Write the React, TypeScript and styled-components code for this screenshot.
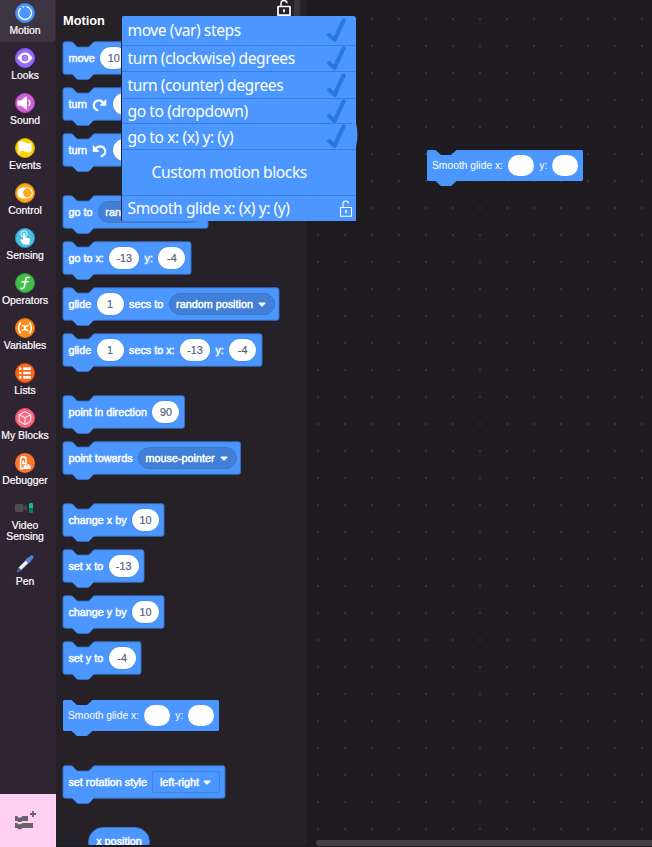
import React from "react";
import styled, { createGlobalStyle, css } from "styled-components";

const Global = createGlobalStyle`
  *, *::before, *::after { box-sizing: border-box; }
  html, body { margin: 0; padding: 0; background: #1e1c20; }
  svg { display: block; }
`;

const BLUE = "#4c97ff";
const EDGE = "#3373cc";

const Editor = styled.div`
  position: relative;
  display: flex;
  width: 652px;
  height: 847px;
  overflow: hidden;
  font-family: "Liberation Sans", Arial, sans-serif;
`;

/* ---------- category rail ---------- */

const Rail = styled.nav`
  display: flex;
  flex-direction: column;
  width: 56px;
  flex: none;
  background: #2e2432;
`;

const Category = styled.div<{ $active?: boolean; $tall?: boolean }>`
  display: flex;
  flex-direction: column;
  align-items: center;
  width: ${(p) => (p.$active ? 55 : 50)}px;
  height: ${(p) => (p.$tall ? 56 : p.$active ? 42 : 45)}px;
  padding-top: 3px;
  padding-right: ${(p) => (p.$active ? 5 : 0)}px;
  margin-bottom: ${(p) => (p.$active ? 3 : 0)}px;
  background: ${(p) => (p.$active ? "#3d3441" : "transparent")};
`;

const CategoryLabel = styled.span`
  margin-top: 2px;
  font-size: 10.4px;
  line-height: 11px;
  color: #fff;
  text-align: center;
  white-space: pre;
  -webkit-text-stroke: 0.2px #fff;
`;

const Extensions = styled.div`
  display: flex;
  align-items: center;
  justify-content: center;
  height: 53px;
  margin-top: auto;
  padding-right: 6px;
  background: #ffd0f2;
`;

/* ---------- palette ---------- */

const dots = (color: string) => css`
  background-image: radial-gradient(circle at 1px 1px, ${color} 1px, transparent 1.3px);
  background-size: 27px 27px;
`;

const Palette = styled.section`
  width: 250px;
  flex: none;
  height: 845px;
  overflow: hidden;
  padding-left: 6px;
  background-color: #252126;
  ${dots("#2a272c")}
  background-position: 18px 18px;
`;

const PaletteTitle = styled.h1`
  margin: 0 0 0 1px;
  height: 41px;
  padding-top: 13px;
  font-size: 12.8px;
  line-height: 15px;
  font-weight: bold;
  color: #fff;
`;

const BlockBox = styled.div<{ $w: number; $gap: number; $plain?: boolean }>`
  position: relative;
  display: flex;
  align-items: center;
  gap: 5.4px;
  width: ${(p) => p.$w + 1}px;
  height: ${(p) => (p.$plain ? 31 : 34)}px;
  margin-bottom: ${(p) => p.$gap}px;
  padding-left: ${(p) => (p.$plain ? 6 : 6.4)}px;
  font-size: 10.8px;
  line-height: 14px;
  color: #fff;
  white-space: pre;
`;

const BlockShape = styled.svg`
  position: absolute;
  left: 0;
  top: 0;
  overflow: visible;
`;

const Word = styled.span<{ $thin?: boolean; $w?: number }>`
  position: relative;
  width: ${(p) => (p.$w ? p.$w + "px" : "auto")};
  font-size: ${(p) => (p.$thin ? "10.3px" : "10.8px")};
  -webkit-text-stroke: ${(p) => (p.$thin ? "0" : "0.45px #fff")};
`;

const Value = styled.span<{ $w: number }>`
  position: relative;
  width: ${(p) => p.$w}px;
  height: 21.6px;
  border-radius: 11px;
  background: #fff;
  box-shadow: 0 0 0 0.5px #4285e4;
  color: #575e75;
  line-height: 22px;
  text-align: center;
  flex: none;
  -webkit-text-stroke: 0.2px #575e75;
`;

const Slot = styled(Value)`
  height: 20.6px;
  box-shadow: none;
`;

const Choice = styled.span<{ $w: number; $square?: boolean }>`
  position: relative;
  display: flex;
  align-items: center;
  justify-content: space-between;
  flex: none;
  width: ${(p) => p.$w}px;
  height: 22px;
  padding: 0 8px 0 6.5px;
  border-radius: ${(p) => (p.$square ? 2 : 11)}px;
  border: 1px solid ${(p) => (p.$square ? "#3f83e0" : "#3b78cb")};
  background: ${(p) => (p.$square ? BLUE : "#4280d7")};
`;

const TurnIcon = styled.svg`
  position: relative;
  flex: none;
`;

const Reporter = styled.div`
  width: 62px;
  height: 30px;
  border-radius: 15px;
  border: 1px solid ${EDGE};
  background: ${BLUE};
  color: #fff;
  font-size: 10.8px;
  line-height: 27px;
  text-align: center;
  -webkit-text-stroke: 0.45px #fff;
`;

const ReporterRow = styled.div`
  display: flex;
  align-items: flex-start;
  gap: 8px;
  margin-left: 1px;
`;

const Checkbox = styled.span`
  width: 17px;
  height: 17px;
  margin-top: 5.5px;
  border-radius: 3px;
  background: #232229;
`;

/* ---------- workspace ---------- */

const Workspace = styled.main`
  flex: 1;
  display: flex;
  flex-direction: column;
  justify-content: space-between;
  height: 847px;
  padding: 150px 0 1px;
  background-color: #1e1c20;
  ${dots("#353338")}
  background-position: 11px 18px;
`;

const Dropped = styled.div`
  margin-left: 120px;
`;

const HScroll = styled.div`
  height: 6px;
  margin-left: 10px;
  border-radius: 3px 0 0 3px;
  background: #403e42;
`;

/* ---------- overlays ---------- */

const VScroll = styled.div`
  position: absolute;
  left: 294px;
  top: 0;
  width: 6px;
  height: 60px;
  background: #39353a;
`;

const LockButton = styled.div`
  position: absolute;
  left: 277px;
  top: 0;
`;

const Menu = styled.div`
  position: absolute;
  left: 121px;
  top: 16px;
  width: 235px;
  height: 205px;
  border-left: 1px solid #17213a;
  border-radius: 2px 3px 0 0;
  background: ${BLUE};
  font-family: "Noto Sans", "Open Sans", sans-serif;
  color: #fff;
`;

const MenuRow = styled.div<{ $h: number; $last?: boolean }>`
  display: flex;
  align-items: center;
  justify-content: space-between;
  height: ${(p) => p.$h}px;
  padding: 0 ${(p) => (p.$last ? 3 : 10)}px 0 5.5px;
  border-bottom: ${(p) => (p.$last ? "none" : "1px solid #3b7fdd")};
`;

const MenuText = styled.span<{ $shift?: number; $lift?: number }>`
  font-size: 15.6px;
  line-height: 20px;
  letter-spacing: -0.42px;
  margin-left: ${(p) => p.$shift ?? 0}px;
  margin-bottom: ${(p) => p.$lift ?? 0}px;
  white-space: pre;
`;

const MenuBump = styled.svg`
  position: absolute;
  right: -2px;
  top: 104px;
`;

/* ---------- drawings ---------- */

const Arrow = () => (
  <svg width="8" height="5" viewBox="0 0 8 5">
    <path d="M1.2 .4H6.8C7.6 .4 7.8 1.2 7.2 1.8L4.7 4.2Q4 4.8 3.3 4.2L.8 1.8C.2 1.2 .4 .4 1.2 .4Z" fill="#fff" />
  </svg>
);

const Check = () => (
  <svg width="19" height="25" viewBox="0 0 19 25">
    <path d="M2.2 17L7.6 22Q12.4 11 16.6 2.4" fill="none" stroke="#2878e2" strokeWidth="4.2" strokeLinecap="round" strokeLinejoin="round" />
  </svg>
);

const Turn = ({ left }: { left?: boolean }) => (
  <TurnIcon width="15" height="15" viewBox="0 0 14 14">
    <g transform={left ? "translate(14 0) scale(-1 1)" : undefined}>
      <path d="M5 12.2C2.4 11.6 1.2 9 1.8 6.6C2.6 3.6 6.2 2.2 9 4L10.4 5.4" fill="none" stroke="#fff" strokeWidth="2.1" strokeLinecap="round" />
      <path d="M13 2.4V7.9H7.4Z" fill="#fff" stroke="#fff" strokeWidth=".6" strokeLinejoin="round" />
    </g>
  </TurnIcon>
);

const OpenLock = ({ thin }: { thin?: boolean }) =>
  thin ? (
    <svg width="14" height="17" viewBox="0 0 14 17">
      <path d="M1.5 7.5H12.5V16.3H1.5ZM4 7V3.5Q4 1 7 1Q9.5 1 9.5 3.5" fill="none" stroke="#fff" strokeWidth="1.1" />
      <rect x="6.2" y="10" width="1.6" height="3.2" fill="#fff" />
    </svg>
  ) : (
    <svg width="14" height="16" viewBox="0 0 14 16">
      <path d="M1 6.5H13V15.2H1Z" fill="none" stroke="#fff" strokeWidth="1.7" strokeLinejoin="round" />
      <path d="M4 6V3Q4 .5 7 .5Q9.8 .5 10 3.2" fill="none" stroke="#fff" strokeWidth="1.5" />
      <rect x="6.1" y="9" width="1.8" height="3.6" rx=".8" fill="#fff" />
    </svg>
  );

const icons: Record<string, React.ReactNode> = {
  Motion: (
    <>
      <circle cx="10" cy="10" r="9.5" fill="#4c97ff" stroke="#3f83e4" />
      <circle cx="10" cy="10" r="6.5" fill="none" stroke="#fff" strokeWidth="1.3" strokeDasharray="34 2.2 1.6 3" transform="rotate(-80 10 10)" />
    </>
  ),
  Looks: (
    <>
      <circle cx="10" cy="10" r="9.5" fill="#9966ff" stroke="#8457e8" />
      <path d="M2.5 10Q6 4.6 10 4.6T17.5 10Q14 15.4 10 15.4T2.5 10Z" fill="#fff" />
      <circle cx="10" cy="10" r="3.3" fill="#8f5ff3" />
      <circle cx="10" cy="10" r="1.7" fill="#e5d8ff" />
      <circle cx="10" cy="10" r=".9" fill="#7b48e0" />
    </>
  ),
  Sound: (
    <>
      <circle cx="10" cy="10" r="9.5" fill="#cf63cf" stroke="#bd42bd" />
      <path d="M3 7.5H6L11 3.6Q12 3.2 12 4.5V15.5Q12 16.8 11 16.2L6 12.7H3Q2.4 12.7 2.4 12V8.2Q2.4 7.5 3 7.5Z" fill="#fff" />
      <path d="M14 7.5Q16 10 14 12.6" fill="none" stroke="#fff" strokeWidth="1.3" strokeLinecap="round" />
    </>
  ),
  Events: (
    <>
      <circle cx="10" cy="10" r="9.5" fill="#ffd500" stroke="#d9b000" />
      <path d="M3.5 4.5Q6.5 2.2 10 4.4T16.5 4.6V13.2Q13 15.6 9.8 13.4Q7.2 11.8 4.6 13.8V17L3.5 16.5Z" fill="#fff" />
    </>
  ),
  Control: (
    <>
      <circle cx="10" cy="10" r="9.5" fill="#ffab19" stroke="#db8c0b" />
      <rect x="2.2" y="4.6" width="15.6" height="10.8" rx="5.4" fill="#fff" />
      <circle cx="12.4" cy="10" r="4.4" fill="#ffab19" />
    </>
  ),
  Sensing: (
    <>
      <circle cx="10" cy="10" r="9.5" fill="#4cbfe6" stroke="#2e9fc9" />
      <circle cx="9" cy="6" r="3.2" fill="none" stroke="#fff" strokeWidth="1" opacity=".85" />
      <path d="M8 5.5Q9.2 4.2 10.2 5.6V9.4L14 10.3Q15.4 10.8 15 12.5L14 16.5H8.3L5.2 12.3Q5.2 11 7 11.4L8 12Z" fill="#fff" />
    </>
  ),
  Operators: (
    <>
      <circle cx="10" cy="10" r="9.5" fill="#40bf4a" stroke="#389438" />
      <path d="M14 4.6Q11.5 3.2 10.7 6.5L9.4 13.2Q8.6 16.6 6 15.3M7 8.8H13" fill="none" stroke="#fff" strokeWidth="1.6" strokeLinecap="round" />
    </>
  ),
  Variables: (
    <>
      <circle cx="10" cy="10" r="9.5" fill="#ff8c1a" stroke="#e0760a" />
      <path d="M5.2 5Q2 10 5.2 15M14.8 5Q18 10 14.8 15M7.2 7.6Q9 7 9.8 9.8T12.8 12.4M13 7.6Q11 7.2 10 10T7 12.4" fill="none" stroke="#fff" strokeWidth="1.5" strokeLinecap="round" />
    </>
  ),
  Lists: (
    <>
      <circle cx="10" cy="10" r="9.5" fill="#ff661a" stroke="#e64d00" />
      <path d="M4.2 5.6H6.4M8.2 5.6H15.8M4.2 10H6.4M8.2 10H15.8M4.2 14.4H6.4M8.2 14.4H15.8" stroke="#fff" strokeWidth="2.6" />
    </>
  ),
  "My Blocks": (
    <>
      <circle cx="10" cy="10" r="9.5" fill="#ff6680" stroke="#f0526d" />
      <path d="M10 3.6L15.8 6.6V13.2L10 16.6L4.2 13.2V6.6ZM4.2 6.6L10 9.6L15.8 6.6M10 9.6V16.6" fill="none" stroke="#fff" strokeWidth="1" strokeLinejoin="round" />
    </>
  ),
  Debugger: (
    <>
      <circle cx="10" cy="10" r="10" fill="#ff7629" />
      <path d="M5.6 15V7Q5.6 3.8 8.2 3.8Q11 3.8 11 6.4V10.5H8.2V7.2M5.6 11.5V15.6H8.5" fill="none" stroke="#fff" strokeWidth="1.7" />
      <path d="M8.4 16V12.4H10V11H11.3V12.2H12.8V11H14.2V12.4H15.6V16Z" fill="#fff" />
    </>
  ),
  "Video\nSensing": (
    <>
      <rect x="0" y="6" width="8.5" height="8" rx="1.4" fill="#4e4d50" />
      <path d="M8 10L11.8 7V13Z" fill="#4e4d50" />
      <rect x="14" y="5" width="4" height="10" rx="1.4" fill="#0fbd8c" />
      <path d="M14 10H18V13.6Q18 15 16.6 15H15.4Q14 15 14 13.6Z" fill="#0b7861" />
    </>
  ),
  Pen: (
    <>
      <path d="M2 18L3.6 13.4L13.2 3.6L16.2 6.6L6.4 16Z" fill="#eef0f7" stroke="#4f5b78" strokeWidth=".7" />
      <path d="M10.6 6.4L15.4 1.8Q17 .8 18.2 2Q19 3.2 18 4.6L13.4 9.2Z" fill="#4a86e0" />
      <path d="M2 18L3.6 13.4L6.4 16Z" fill="#40577e" />
    </>
  ),
};

/* ---------- block model ---------- */

type Part =
  | { word: string }
  | { value: string; w: number }
  | { choice: string; w: number; square?: boolean }
  | { turn: "left" | "right" };

const t = (word: string): Part => ({ word });
const v = (value: string, w = 27): Part => ({ value, w });

const palette: { w: number; gap: number; parts: Part[] }[] = [
  { w: 110, gap: 12, parts: [t("move"), v("10")] },
  { w: 130, gap: 12, parts: [t("turn"), { turn: "right" }, v("")] },
  { w: 130, gap: 28, parts: [t("turn"), { turn: "left" }, v("")] },
  { w: 146, gap: 12, parts: [t("go to"), { choice: "random position", w: 106 }] },
  { w: 129, gap: 12, parts: [t("go to x:"), v("-13", 30), t("y:"), v("-4")] },
  { w: 217, gap: 12, parts: [t("glide"), v("1"), t("secs to"), { choice: "random position", w: 106 }] },
  { w: 200, gap: 28, parts: [t("glide"), v("1"), t("secs to x:"), v("-13", 30), t("y:"), v("-4")] },
  { w: 122.5, gap: 12, parts: [t("point in direction"), v("90")] },
  { w: 178.5, gap: 28, parts: [t("point towards"), { choice: "mouse-pointer", w: 98.5 }] },
  { w: 102, gap: 12, parts: [t("change x by"), v("10")] },
  { w: 82, gap: 12, parts: [t("set x to"), v("-13", 30)] },
  { w: 102, gap: 12, parts: [t("change y by"), v("10")] },
  { w: 79, gap: 25, parts: [t("set y to"), v("-4")] },
];

const outline = (w: number) =>
  `M1 3Q1 .8 3.2 .8H8.6C10 .8 10.6 1.2 11.6 2.2L13.9 4.7C14.8 5.7 15.4 6.1 16.8 6.1H25.2C26.6 6.1 27.2 5.7 28.1 4.7L30.4 2.2C31.4 1.2 32 .8 33.4 .8H${w - 2}Q${w} .8 ${w} 3V31Q${w} 33.2 ${w - 2} 33.2H33.4C32 33.2 31.4 33.6 30.4 34.6L28.1 37.1C27.2 38.1 26.6 38.5 25.2 38.5H16.8C15.4 38.5 14.8 38.1 13.9 37.1L11.6 34.6C10.6 33.6 10 33.2 8.6 33.2H3.2Q1 33.2 1 31Z`;

const Block = ({ w, gap, parts }: { w: number; gap: number; parts: Part[] }) => (
  <BlockBox $w={w} $gap={gap}>
    <BlockShape width={w + 1} height={40}>
      <path d={outline(w)} fill={BLUE} stroke={EDGE} strokeWidth=".9" />
    </BlockShape>
    {parts.map((p, i) => {
      if ("word" in p) return <Word key={i}>{p.word}</Word>;
      if ("value" in p) return <Value key={i} $w={p.w}>{p.value}</Value>;
      if ("turn" in p) return <Turn key={i} left={p.turn === "left"} />;
      return (
        <Choice key={i} $w={p.w} $square={p.square}>
          <Word>{p.choice}</Word>
          <Arrow />
        </Choice>
      );
    })}
  </BlockBox>
);

const SmoothGlide = ({ gap = 0 }: { gap?: number }) => (
  <BlockBox $w={156} $gap={gap} $plain>
    <BlockShape width={158} height={37}>
      <path
        d="M2 0H9.5L15 5H25L30.5 0H156L157 1V30L156 31H30.5L25 36H15L9.5 31H2L1 30V1Z"
        fill={BLUE}
      />
    </BlockShape>
    <Word $thin $w={71}>Smooth glide x:</Word>
    <Slot $w={25.5} />
    <Word $thin $w={7.5}>y:</Word>
    <Slot $w={26} />
  </BlockBox>
);

const Categories = () => (
  <>
    {Object.entries(icons).map(([name, icon]) => (
      <Category key={name} $active={name === "Motion"} $tall={name.startsWith("Video")}>
        <svg width="20" height="20" viewBox="0 0 20 20">{icon}</svg>
        <CategoryLabel>{name}</CategoryLabel>
      </Category>
    ))}
  </>
);

const menuRows = [
  { text: "move (var) steps", h: 30, lift: 1 },
  { text: "turn (clockwise) degrees", h: 26, lift: 2 },
  { text: "turn (counter) degrees", h: 27, lift: 0 },
  { text: "go to (dropdown)", h: 25, lift: 1 },
  { text: "go to x: (x) y: (y)", h: 26, lift: 0 },
];

export default function App() {
  return (
    <>
      <Global />
      <Editor>
        <Rail>
          <Categories />
          <Extensions>
            <svg width="24" height="20" viewBox="0 0 24 20">
              <path d="M2 5H4L5.5 6.5H8L9.5 5H15V10H9.5L8 11H5.5L4 10H2ZM2 12H4L5.5 13.3H8L9.5 12H20V17H9.5L8 18.2H5.5L4 17H2Z" fill="#666366" />
              <path d="M20 0V6M17 3H23" stroke="#666366" strokeWidth="1.8" />
            </svg>
          </Extensions>
        </Rail>

        <Palette>
          <PaletteTitle>Motion</PaletteTitle>
          {palette.map((b, i) => (
            <Block key={i} {...b} />
          ))}
          <SmoothGlide gap={34} />
          <Block
            w={163}
            gap={28}
            parts={[t("set rotation style"), { choice: "left-right", w: 68, square: true }]}
          />
          <ReporterRow>
            <Checkbox />
            <Reporter>x position</Reporter>
          </ReporterRow>
        </Palette>

        <Workspace>
          <Dropped>
            <SmoothGlide />
          </Dropped>
          <HScroll />
        </Workspace>

        <VScroll />
        <LockButton>
          <OpenLock />
        </LockButton>

        <Menu>
          <MenuBump width="6" height="30" viewBox="0 0 6 30">
            <ellipse cx="2" cy="15" rx="3.4" ry="14" fill={BLUE} />
          </MenuBump>
          {menuRows.map((r) => (
            <MenuRow key={r.text} $h={r.h}>
              <MenuText $lift={r.lift}>{r.text}</MenuText>
              <Check />
            </MenuRow>
          ))}
          <MenuRow $h={46}>
            <MenuText $shift={24} $lift={1}>Custom motion blocks</MenuText>
          </MenuRow>
          <MenuRow $h={25} $last>
            <MenuText $lift={2}>Smooth glide x: (x) y: (y)</MenuText>
            <OpenLock thin />
          </MenuRow>
        </Menu>
      </Editor>
    </>
  );
}
